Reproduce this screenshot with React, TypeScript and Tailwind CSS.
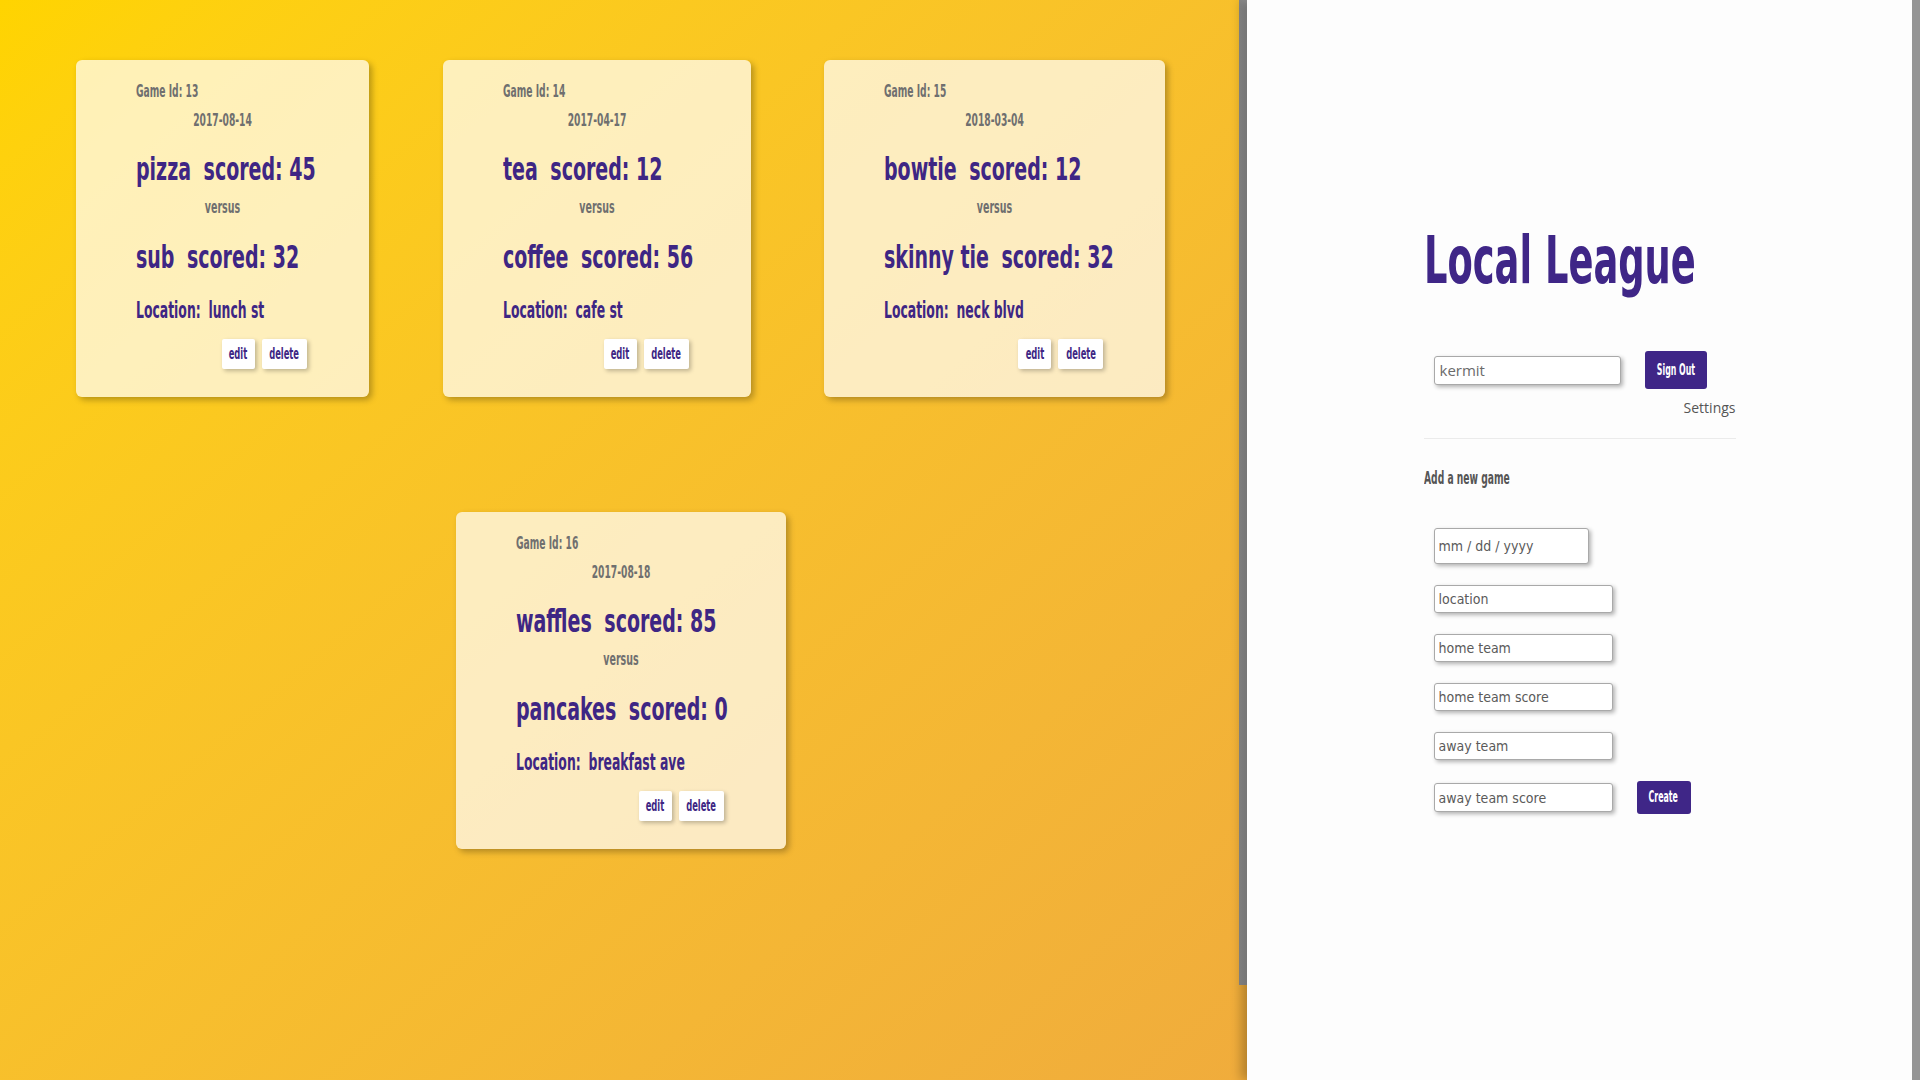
import React from 'react'

const narrow = "font-['DejaVu_Sans_Condensed','Liberation_Sans_Narrow',sans-serif]"
const open = "font-['Open_Sans',sans-serif]"

type Game = {
  id: number
  date: string
  home: string
  homeScore: number
  away: string
  awayScore: number
  location: string
  width: string
}

const games: Game[] = [
  { id: 13, date: '2017-08-14', home: 'pizza', homeScore: 45, away: 'sub', awayScore: 32, location: 'lunch st', width: 'w-[293px]' },
  { id: 14, date: '2017-04-17', home: 'tea', homeScore: 12, away: 'coffee', awayScore: 56, location: 'cafe st', width: 'w-[308px]' },
  { id: 15, date: '2018-03-04', home: 'bowtie', homeScore: 12, away: 'skinny tie', awayScore: 32, location: 'neck blvd', width: 'w-[341px]' },
  { id: 16, date: '2017-08-18', home: 'waffles', homeScore: 85, away: 'pancakes', awayScore: 0, location: 'breakfast ave', width: 'w-[330px]' },
]

function GameCard({ game }: { game: Game }) {
  return (
    <div className={`${game.width} h-[337px] px-[60px] pt-[21px] rounded-md bg-white/70 shadow-[3px_3px_6px_rgba(0,0,0,0.28)] ${narrow}`}>
      <div className="text-[17px] leading-[20px] text-[#6f6f6f] font-bold whitespace-nowrap scale-x-[0.6] origin-left">Game Id: {game.id}</div>
      <div className="mt-[9px] text-[17px] leading-[20px] text-[#6f6f6f] font-bold text-center whitespace-nowrap scale-x-[0.6]">{game.date}</div>
      <div className="mt-[21px] text-[32px] leading-[36px] text-[#3e2684] font-bold whitespace-nowrap scale-x-[0.66] origin-left">
        {game.home}
        <span className="ml-[19px]">scored: {game.homeScore}</span>
      </div>
      <div className="mt-[10px] text-[17px] leading-[20px] text-[#6f6f6f] font-bold text-center scale-x-[0.62]">versus</div>
      <div className="mt-[22px] text-[32px] leading-[36px] text-[#3e2684] font-bold whitespace-nowrap scale-x-[0.66] origin-left">
        {game.away}
        <span className="ml-[19px]">scored: {game.awayScore}</span>
      </div>
      <div className="mt-[22px] text-[23px] leading-[26px] text-[#3e2684] font-bold whitespace-nowrap scale-x-[0.6] origin-left">
        Location:
        <span className="ml-[13px]">{game.location}</span>
      </div>
      <div className="mt-[16px] flex justify-end gap-[7px] pr-[2px]">
        <button className="w-[33px] h-[30px] bg-white rounded-[2px] shadow-[2px_2px_4px_rgba(0,0,0,0.25)] text-[15px] font-bold text-[#3e2684] flex items-center justify-center">
          <span className="inline-block scale-x-[0.62]">edit</span>
        </button>
        <button className="w-[45px] h-[30px] bg-white rounded-[2px] shadow-[2px_2px_4px_rgba(0,0,0,0.25)] text-[15px] font-bold text-[#3e2684] flex items-center justify-center">
          <span className="inline-block scale-x-[0.62]">delete</span>
        </button>
      </div>
    </div>
  )
}

function Field({ placeholder, width = 'w-[179px]', height = 'h-[28px]' }: { placeholder: string; width?: string; height?: string }) {
  return (
    <input
      placeholder={placeholder}
      className={`${width} ${height} ml-[10px] px-[4px] bg-white border border-[#a9a9a9] rounded-[3px] shadow-[2px_2px_4px_rgba(0,0,0,0.3)] text-[14px] text-[#555] placeholder:text-[#5a5a5a] outline-none ${narrow}`}
    />
  )
}

export default function App() {
  return (
    <div className="flex w-full h-screen overflow-hidden">
      <div className="flex w-[1247px] h-full bg-linear-to-br from-[#ffd400] to-[#f0ac3c]">
        <div className="w-[1239px] flex flex-wrap justify-evenly content-start pt-[60px] pl-[2px] gap-y-[115px]">
          {games.map((g) => (
            <GameCard key={g.id} game={g} />
          ))}
        </div>
        <div className="w-[8px] h-[985px] bg-linear-to-r from-[#8a8a8a] to-[#999]" />
      </div>

      <div className="flex flex-1 h-full bg-[#fdfdfd] shadow-[-6px_0_10px_rgba(0,0,0,0.25)]">
        <div className="flex-1">
          <div className="w-[312px] mx-auto flex flex-col">
            <h1 className={`mt-[228px] text-[65px] leading-[66px] font-bold text-[#3f2687] whitespace-nowrap scale-x-[0.63] origin-left ${narrow}`}>Local League</h1>

            <div className="mt-[57px] flex items-center h-[38px]">
              <input
                defaultValue="kermit"
                className={`w-[187px] h-[29px] ml-[10px] px-[5px] bg-white border border-[#a9a9a9] rounded-[3px] shadow-[2px_2px_4px_rgba(0,0,0,0.3)] text-[15px] text-[#6b6b6b] outline-none ${open}`}
              />
              <button className={`ml-[24px] w-[62px] h-[38px] rounded-[3px] bg-[#3f2687] text-white text-[15px] font-bold flex items-center justify-center ${narrow}`}>
                <span className="inline-block scale-x-[0.58] whitespace-nowrap">Sign Out</span>
              </button>
            </div>

            <div className={`mt-[9px] text-right text-[14px] leading-[20px] text-[#555] ${open}`}>Settings</div>

            <div className="mt-[20px] h-px bg-[#ebebeb]" />

            <div className={`mt-[29px] text-[17px] leading-[20px] font-bold text-[#555] whitespace-nowrap scale-x-[0.6] origin-left ${narrow}`}>Add a new game</div>

            <div className="mt-[40px] flex flex-col gap-[21px]">
              <Field placeholder="mm / dd / yyyy" width="w-[155px]" height="h-[36px]" />
              <Field placeholder="location" />
              <Field placeholder="home team" />
              <Field placeholder="home team score" />
              <Field placeholder="away team" />
              <div className="flex items-center">
                <Field placeholder="away team score" height="h-[29px]" />
                <button className={`ml-[24px] w-[54px] h-[33px] rounded-[3px] bg-[#3f2687] text-white text-[15px] font-bold flex items-center justify-center ${narrow}`}>
                  <span className="inline-block scale-x-[0.58]">Create</span>
                </button>
              </div>
            </div>
          </div>
        </div>
        <div className="w-[8px] h-full bg-[#959595]" />
      </div>
    </div>
  )
}
